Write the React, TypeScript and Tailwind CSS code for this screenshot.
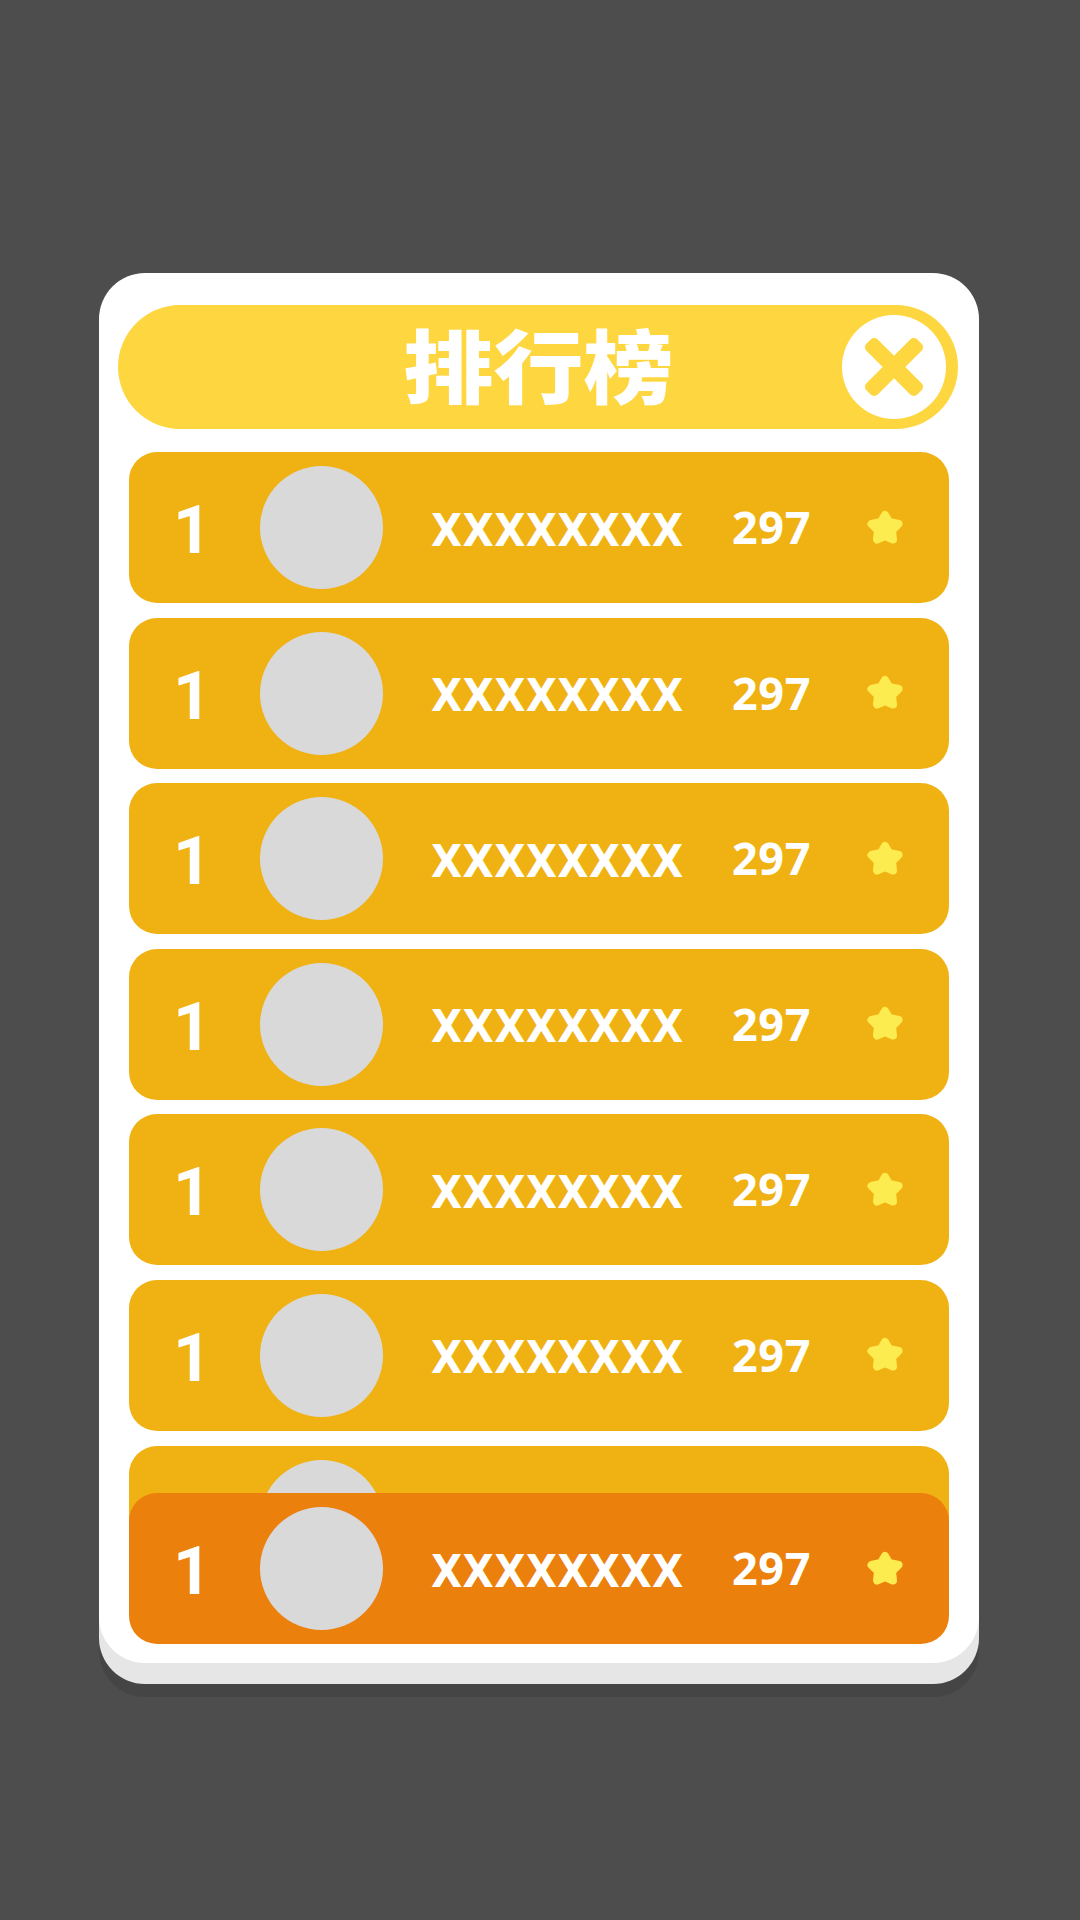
const Star = () => (
  <svg viewBox="0 0 38 36" className="-mt-[2px] ml-[1px] h-[36px] w-[38px] shrink-0" aria-hidden="true">
    <path
      d="M19 6 L23 12.8 L32.5 15 L26 21.5 L27 30.5 L19 27 L11 30.5 L12 21.5 L5.5 15 L15 12.8 Z"
      fill="#fdec50"
      stroke="#fdec50"
      strokeWidth="8"
      strokeLinejoin="round"
    />
  </svg>
);

const CloseIcon = () => (
  <svg viewBox="0 0 60 60" className="h-[60px] w-[60px]" aria-hidden="true">
    <g fill="#fed63f" transform="rotate(45 30 30)">
      <rect x="-6" y="22" width="72" height="16" rx="5" />
      <rect x="22" y="-6" width="16" height="72" rx="5" />
    </g>
  </svg>
);

const RankRow = ({ className }: { className: string }) => (
  <div className={`flex h-[151px] shrink-0 items-center rounded-[28px] text-white ${className}`}>
    <span className="mt-[6px] ml-[44px] w-[87px] text-[67px] leading-none font-bold font-['Roboto',sans-serif]">1</span>
    <div className="h-[123px] w-[123px] shrink-0 rounded-full bg-[#d9d9d9]" />
    <span className="mt-[5px] ml-[48px] w-[301px] text-[45px] leading-none font-bold tracking-[0.35px] font-['DejaVu_Sans_Condensed','DejaVu_Sans',sans-serif]">XXXXXXXX</span>
    <span className="-mt-[2px] w-[133px] text-[45px] leading-none font-bold tracking-[0.6px] font-['Noto_Sans',sans-serif]">297</span>
    <Star />
  </div>
);

export default function App() {
  return (
    <div className="min-h-[1920px] bg-[#4d4d4d] pt-[273px] pl-[99px]">
      <div className="relative h-[1390px] w-[880px] rounded-[46px] bg-white pt-[32px] shadow-[0_21px_0_#e6e6e6,0_34px_0_#454545]">
        <div className="relative mr-[21px] ml-[19px] flex h-[124px] items-center justify-center rounded-full bg-[#fed63f]">
          <h1 className="-mt-[8px] ml-[1px] scale-y-[0.88] text-[90px] leading-none font-black text-white font-['Noto_Sans_CJK_SC',sans-serif]">排行榜</h1>
          <button className="absolute top-[10px] right-[12px] flex h-[104px] w-[104px] items-center justify-center rounded-full bg-white">
            <CloseIcon />
          </button>
        </div>
        <div className="mx-[30px] mt-[23px] flex h-[1192px] flex-col gap-[14.6px] overflow-hidden">
          {[0, 1, 2, 3, 4, 5, 6].map((i) => (
            <RankRow key={i} className="bg-[#f0b213]" />
          ))}
        </div>
        <div className="absolute right-[30px] bottom-[19px] left-[30px]">
          <RankRow className="bg-[#eb800d]" />
        </div>
      </div>
    </div>
  );
}
